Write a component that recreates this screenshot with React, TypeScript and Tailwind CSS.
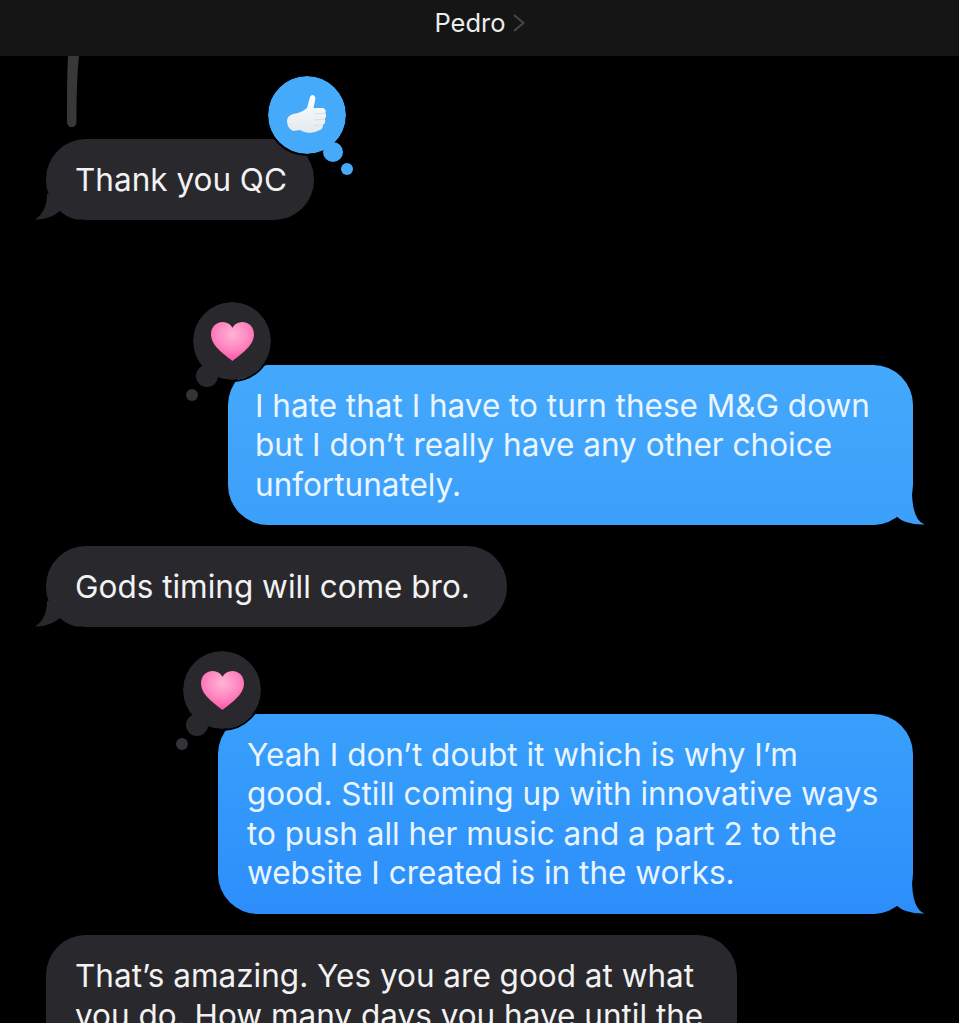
import React from 'react'

const HeartEmoji = ({ id }: { id: string }) => (
  <svg width="43" height="39" viewBox="0 0 42 38">
    <defs>
      <radialGradient id={id} cx="50%" cy="32%" r="70%">
        <stop offset="0%" stopColor="#ffb3d6" />
        <stop offset="55%" stopColor="#ff86c0" />
        <stop offset="100%" stopColor="#ff4fa6" />
      </radialGradient>
    </defs>
    <path
      d="M21 38C12 31 0 23 0 12C0 4 6 0 11.5 0C15.5 0 19 2 21 5.5C23 2 26.5 0 30.5 0C36 0 42 4 42 12C42 23 30 31 21 38Z"
      fill={`url(#${id})`}
    />
  </svg>
)

const ThumbEmoji = () => (
  <svg width="40" height="42" viewBox="0 0 40 42">
    <defs>
      <linearGradient id="thumbFill" x1="0" y1="0" x2="0" y2="1">
        <stop offset="0%" stopColor="#ffffff" />
        <stop offset="100%" stopColor="#e3e9ee" />
      </linearGradient>
    </defs>
    <path
      d="M20 14L23 3Q24.5 0 27 1.5Q29 3 28 7L26.5 14L36 14Q39.5 15 38.5 19Q40 22 38 25Q39 29 36 31Q36 35 33 36Q22 42 13 36L6 37Q0 34 0 27Q0 22 6 20L11 19Q17 17 20 14Z"
      fill="url(#thumbFill)"
    />
    <path
      d="M27 20L38 19M27 26L38 25M27 31.5L36 31"
      stroke="#d3dbe1"
      strokeWidth="0.8"
      fill="none"
    />
  </svg>
)

const GrayTail = () => (
  <svg className="absolute left-[-11px] bottom-0" width="44" height="26" viewBox="0 0 44 26">
    <path d="M12 0Q12 18 0 25.5Q14 26 25 17Q32 24 44 26L44 0Z" fill="#29282d" />
  </svg>
)

// same gradient as the bubble over these 35px, so no seam shows
const BlueTail = ({ id, from, to }: { id: string; from: string; to: string }) => (
  <svg className="absolute right-[-12px] bottom-0" width="58" height="35" viewBox="0 0 58 35">
    <defs>
      <linearGradient id={id} x1="0" y1="0" x2="0" y2="1">
        <stop offset="0%" stopColor={from} />
        <stop offset="100%" stopColor={to} />
      </linearGradient>
    </defs>
    <path d="M45 0Q45 30 57.5 34.5Q38 35 29 26Q20 35 0 35L0 0Z" fill={`url(#${id})`} />
  </svg>
)

const HeartReaction = ({ id }: { id: string }) => (
  <>
    <div className="absolute left-[-37px] top-[-65px] flex size-[82px] items-center justify-center rounded-full border-2 border-black bg-[#29282d] bg-clip-padding">
      <HeartEmoji id={id} />
    </div>
    <div className="absolute left-[-42px] top-[24px] size-3 rounded-full bg-[#333237]" />
    <div className="absolute left-[-32px] top-0 size-[22px] rounded-full bg-[#29282d]" />
  </>
)

const ThumbReaction = () => (
  <>
    <div className="absolute right-[-34px] top-[-65px] flex size-[82px] items-center justify-center rounded-full border-2 border-black bg-[#45aaf9] bg-clip-padding">
      <ThumbEmoji />
    </div>
    <div className="absolute right-[-39px] top-[24px] size-3 rounded-full bg-[#45aaf9]" />
    <div className="absolute right-[-29px] top-[3px] size-5 rounded-full bg-[#45aaf9]" />
  </>
)

export default function App() {
  return (
    <div className="h-[1023px] overflow-hidden whitespace-nowrap bg-black font-['Inter',sans-serif] text-[31.5px] leading-[39.5px]">
      <header className="flex h-14 items-center justify-center gap-[7px] bg-[#151515] pb-[11px] text-[25.5px] text-[#ececec]">
        <span>Pedro</span>
        <svg width="12" height="18" viewBox="0 0 12 18" fill="none">
          <path d="M1 1L10.5 9L1 17" stroke="#4a4a4c" strokeWidth="1.8" />
        </svg>
      </header>

      <div className="flex flex-col items-start px-[46px]">
        <svg className="ml-[21px]" width="12" height="71" viewBox="0 0 12 71">
          <path d="M1 0H12C10 20 9.5 40 9.5 66.5A4.75 4.75 0 0 1 0 66.5C0 40 0 20 1 0Z" fill="#38383a" />
        </svg>

        <div className="relative mt-3 w-[268px] rounded-[40px] bg-[#29282d] px-[29px] py-[20.75px] text-[#f2f2f2]">
          <GrayTail />
          <ThumbReaction />
          <p className="relative">Thank you QC</p>
        </div>

        <div className="relative mt-[145px] w-[685px] self-end rounded-[40px] bg-gradient-to-b from-[#44a8fb] to-[#3ca0fb] px-[27px] py-[20.75px] text-[#eaf5ff]">
          <BlueTail id="tailOne" from="#3ea2fb" to="#3ca0fb" />
          <HeartReaction id="heartOne" />
          <p className="relative">
            I hate that I have to turn these M&amp;G down
            <br />
            but I don’t really have any other choice
            <br />
            unfortunately.
          </p>
        </div>

        <div className="relative mt-[21px] w-[461px] rounded-[40px] bg-[#29282d] px-[29px] py-[20.75px] text-[#f2f2f2]">
          <GrayTail />
          <p className="relative">Gods timing will come bro.</p>
        </div>

        <div className="relative mt-[87px] w-[695px] self-end rounded-[40px] bg-gradient-to-b from-[#38a0fb] to-[#2d8efb] px-[29px] py-[20.75px] text-[#eaf5ff]">
          <BlueTail id="tailTwo" from="#2f91fb" to="#2d8efb" />
          <HeartReaction id="heartTwo" />
          <p className="relative">
            Yeah I don’t doubt it which is why I’m
            <br />
            good. Still coming up with innovative ways
            <br />
            to push all her music and a part 2 to the
            <br />
            website I created is in the works.
          </p>
        </div>

        <div className="mt-[21px] w-[691px] rounded-t-[40px] bg-[#29282d] px-[29px] pb-[40px] pt-[21.75px] text-[#f2f2f2]">
          <p>
            That’s amazing. Yes you are good at what
            <br />
            you do. How many days you have until the
          </p>
        </div>
      </div>
    </div>
  )
}
